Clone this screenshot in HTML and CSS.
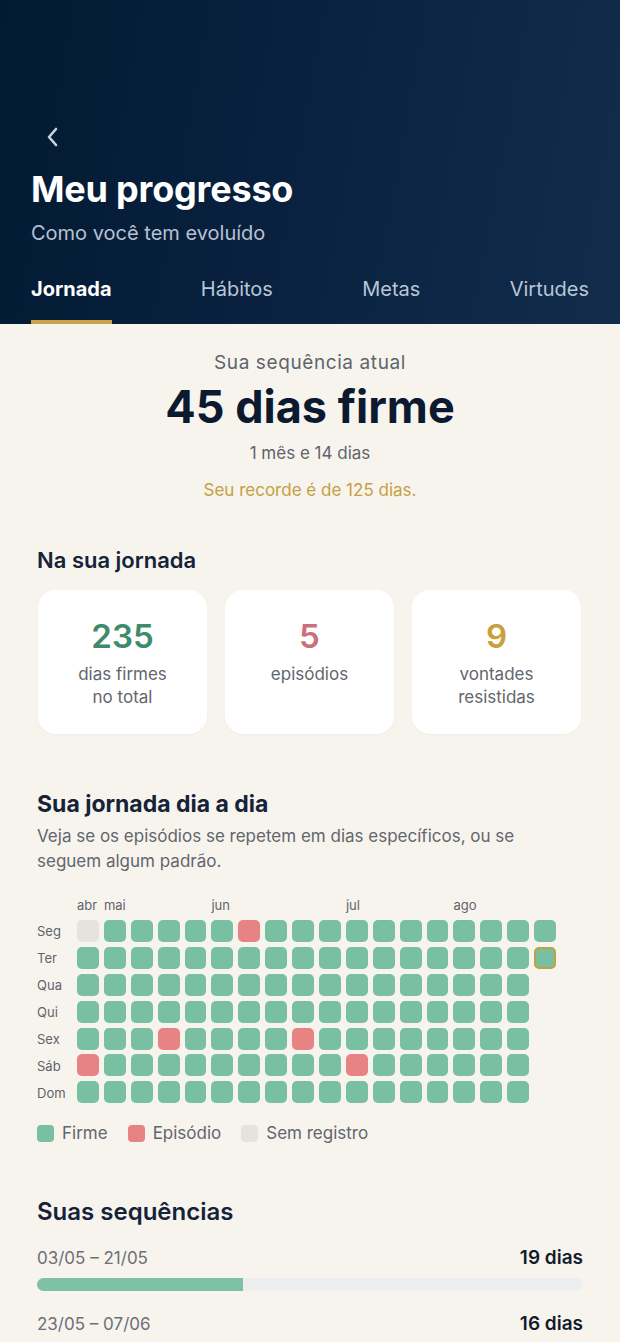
FILE: index.html
```html
<!DOCTYPE html>
<html lang="pt-BR">
<head>
    <meta charset="UTF-8">
    <title>Meu progresso</title>
    <link rel="stylesheet" href="styles.css">
</head>
<body>
    <header class="hero">
        <button class="back" type="button" aria-label="Voltar">
            <svg width="16" height="24" viewBox="0 0 16 24"><path d="M11 4 L4 12 L11 20" fill="none" stroke="#c9d3e1" stroke-width="2.6" stroke-linecap="round" stroke-linejoin="round"/></svg>
        </button>
        <h1>Meu progresso</h1>
        <p class="subtitle">Como você tem evoluído</p>
        <nav class="tabs">
            <a class="tab active">Jornada</a>
            <a class="tab">Hábitos</a>
            <a class="tab">Metas</a>
            <a class="tab">Virtudes</a>
        </nav>
    </header>

    <main class="content">
        <section class="streak">
            <p class="streak-label">Sua sequência atual</p>
            <p class="streak-value">45 dias firme</p>
            <p class="streak-sub">1 mês e 14 dias</p>
            <p class="streak-record">Seu recorde é de 125 dias.</p>
        </section>

        <h2 class="section-title first">Na sua jornada</h2>
        <div class="cards">
            <div class="card">
                <span class="num green">235</span>
                <span class="label">dias firmes<br>no total</span>
            </div>
            <div class="card">
                <span class="num red">5</span>
                <span class="label">episódios</span>
            </div>
            <div class="card">
                <span class="num gold">9</span>
                <span class="label">vontades<br>resistidas</span>
            </div>
        </div>

        <h2 class="section-title daily">Sua jornada dia a dia</h2>
        <p class="desc">Veja se os episódios se repetem em dias específicos, ou se seguem algum padrão.</p>

        <div class="heatmap">
            <div class="days">
                <span></span>
                <span>Seg</span><span>Ter</span><span>Qua</span><span>Qui</span><span>Sex</span><span>Sáb</span><span>Dom</span>
            </div>
            <div class="map">
                <div class="months">
                    <span class="m1">abr</span>
                    <span class="m2">mai</span>
                    <span class="m6">jun</span>
                    <span class="m11">jul</span>
                    <span class="m15">ago</span>
                </div>
                <div class="cells">
                    <i class="nd"></i><i></i><i></i><i></i><i></i><i class="ep"></i><i></i>
                    <i></i><i></i><i></i><i></i><i></i><i></i><i></i>
                    <i></i><i></i><i></i><i></i><i></i><i></i><i></i>
                    <i></i><i></i><i></i><i></i><i class="ep"></i><i></i><i></i>
                    <i></i><i></i><i></i><i></i><i></i><i></i><i></i>
                    <i></i><i></i><i></i><i></i><i></i><i></i><i></i>
                    <i class="ep"></i><i></i><i></i><i></i><i></i><i></i><i></i>
                    <i></i><i></i><i></i><i></i><i></i><i></i><i></i>
                    <i></i><i></i><i></i><i></i><i class="ep"></i><i></i><i></i>
                    <i></i><i></i><i></i><i></i><i></i><i></i><i></i>
                    <i></i><i></i><i></i><i></i><i></i><i class="ep"></i><i></i>
                    <i></i><i></i><i></i><i></i><i></i><i></i><i></i>
                    <i></i><i></i><i></i><i></i><i></i><i></i><i></i>
                    <i></i><i></i><i></i><i></i><i></i><i></i><i></i>
                    <i></i><i></i><i></i><i></i><i></i><i></i><i></i>
                    <i></i><i></i><i></i><i></i><i></i><i></i><i></i>
                    <i></i><i></i><i></i><i></i><i></i><i></i><i></i>
                    <i></i><i class="today"></i>
                </div>
            </div>
        </div>

        <div class="legend">
            <span class="key"><i></i>Firme</span>
            <span class="key"><i class="ep"></i>Episódio</span>
            <span class="key"><i class="nd"></i>Sem registro</span>
        </div>

        <h2 class="section-title seqs">Suas sequências</h2>
        <div class="seq">
            <div class="seq-row"><span class="range">03/05 – 21/05</span><span class="days-count">19 dias</span></div>
            <div class="bar"><div class="fill" style="width: 37.7%"></div></div>
        </div>
        <div class="seq">
            <div class="seq-row"><span class="range">23/05 – 07/06</span><span class="days-count">16 dias</span></div>
            <div class="bar"><div class="fill" style="width: 31.7%"></div></div>
        </div>
    </main>
</body>
</html>
```

FILE: styles.css
```css
* { box-sizing: border-box; }
body { margin: 0; background: #f7f4ee; font-family: Inter, "Noto Sans", sans-serif; color: #0f1f3a; }
p, h1, h2 { margin: 0; }

/* header */
.hero { height: 324px; padding: 125px 31px 0; background: linear-gradient(100deg, #031a33 0%, #08203d 40%, #0e2746 75%, #132c4b 100%); display: flex; flex-direction: column; }
.back { width: 30px; height: 24px; padding: 0; margin-left: 14px; background: none; border: none; display: block; }
.back svg { display: block; }
.hero h1 { margin-top: 18px; font-size: 36px; line-height: 44px; font-weight: 700; color: #fff; letter-spacing: -0.2px; }
.subtitle { margin-top: 8px; font-size: 20px; line-height: 28px; color: #b7c2d1; font-weight: 400; }
.tabs { margin-top: auto; display: flex; justify-content: space-between; }
.tab { font-size: 20px; line-height: 28px; padding-bottom: 17px; color: #b8c6d8; border-bottom: 4px solid transparent; }
.tab.active { color: #fff; font-weight: 700; border-bottom-color: #c9a24b; }

/* content */
.content { padding: 26px 37px 40px 37px; }
.streak { text-align: center; }
.streak-label { font-size: 19px; line-height: 26px; color: #5f646b; letter-spacing: 0.6px; }
.streak-value { margin-top: 3px; font-size: 45px; line-height: 56px; font-weight: 700; color: #0c1a30; }
.streak-sub { margin-top: 6px; font-size: 17px; line-height: 24px; color: #5f646b; }
.streak-record { margin-top: 13px; font-size: 17px; line-height: 24px; color: #c4a045; }

.section-title { font-size: 22px; line-height: 30px; font-weight: 600; color: #152238; }
.section-title.first { margin-top: 43px; }
.section-title.daily { margin-top: 54px; font-size: 23px; line-height: 32px; font-weight: 700; }
.section-title.seqs { margin-top: 52px; font-size: 24px; line-height: 32px; font-weight: 600; }

.cards { margin-top: 15px; display: grid; grid-template-columns: repeat(3, 169px); gap: 18px; padding-left: 1px; }
.card { background: #fff; border-radius: 18px; padding: 26px 8px 25px; display: flex; flex-direction: column; align-items: center; text-align: center; box-shadow: 0 1px 2px rgba(0,0,0,0.03); }
.num { font-size: 33px; line-height: 40px; font-weight: 600; }
.num.green { color: #3e8a6a; }
.num.red { color: #c9717a; }
.num.gold { color: #c9a03a; }
.label { margin-top: 7px; font-size: 17px; line-height: 23px; color: #62666d; }

.desc { margin-top: 4px; font-size: 17px; line-height: 25px; color: #62666d; }

/* heatmap */
.heatmap { margin-top: 23px; display: flex; gap: 5px; }
.days { width: 35px; display: flex; flex-direction: column; gap: 5px; }
.days span { height: 22px; line-height: 22px; font-size: 13px; color: #5f646b; }
.days span:first-child { height: 16px; margin-bottom: 2px; }
.map { display: flex; flex-direction: column; gap: 7px; }
.months { display: grid; grid-template-columns: repeat(18, 21.9px); column-gap: 5px; height: 16px; font-size: 13px; line-height: 16px; color: #5f646b; }
.months span { white-space: nowrap; }
.m1 { grid-column: 1; }
.m2 { grid-column: 2; }
.m6 { grid-column: 6; }
.m11 { grid-column: 11; }
.m15 { grid-column: 15; }
.cells { display: grid; grid-template-rows: repeat(7, 22px); grid-auto-flow: column; grid-auto-columns: 21.9px; gap: 4.9px 5px; }
.cells i, .key i { display: block; background: #79bfa2; border-radius: 5px; }
.cells i.ep, .key i.ep { background: #e78383; }
.cells i.nd, .key i.nd { background: #e5e3de; }
.cells i.today { border: 2.5px solid #c4a045; }

.legend { margin-top: 18px; display: flex; gap: 20px; }
.key { display: flex; align-items: center; gap: 8px; font-size: 17px; line-height: 22px; color: #62666d; }
.key i { width: 17px; height: 17px; border-radius: 4px; }

/* sequences */
.seq { margin-top: 18px; }
.seq + .seq { margin-top: 21px; }
.seq-row { display: flex; justify-content: space-between; align-items: center; }
.range { font-size: 17px; line-height: 24px; color: #6b6f76; }
.days-count { font-size: 19px; line-height: 24px; font-weight: 600; color: #121c2c; }
.bar { margin-top: 8px; height: 13px; background: #eceef0; border-radius: 7px; overflow: hidden; }
.fill { height: 100%; background: #7fc1a4; }
```
